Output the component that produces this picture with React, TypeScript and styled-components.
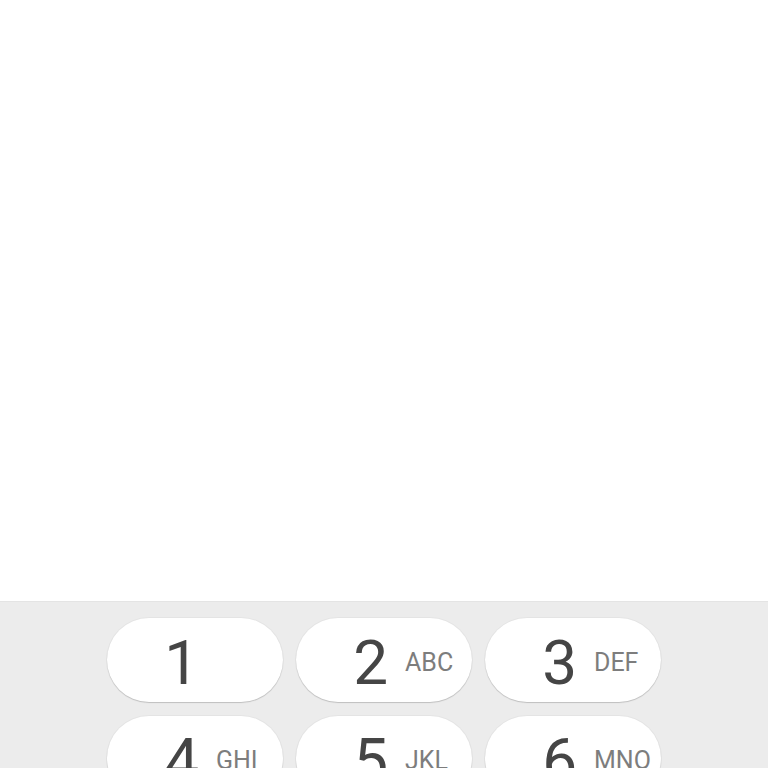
import React from "react";
import styled, { createGlobalStyle } from "styled-components";

const keys = [
  { digit: "1", letters: "" },
  { digit: "2", letters: "ABC" },
  { digit: "3", letters: "DEF" },
  { digit: "4", letters: "GHI" },
  { digit: "5", letters: "JKL" },
  { digit: "6", letters: "MNO" },
  { digit: "7", letters: "PQRS" },
  { digit: "8", letters: "TUV" },
  { digit: "9", letters: "WXYZ" },
];

export default function App() {
  return (
    <Screen>
      <GlobalStyle />
      <Display />
      <Keypad>
        <KeyGrid>
          {keys.map((k) => (
            <Key key={k.digit}>
              <Digit>{k.digit}</Digit>
              <Letters>{k.letters}</Letters>
            </Key>
          ))}
        </KeyGrid>
      </Keypad>
    </Screen>
  );
}

const GlobalStyle = createGlobalStyle`
  html, body {
    margin: 0;
    padding: 0;
    background: #ffffff;
    overflow: hidden;
  }
`;

const Screen = styled.div`
  display: flex;
  flex-direction: column;
  height: 768px;
  overflow: hidden;
  font-family: Roboto, "Noto Sans", sans-serif;
`;

const Display = styled.div`
  flex: 0 0 601px;
  background: #ffffff;
`;

const Keypad = styled.div`
  flex: 1;
  background: #ececec;
  border-top: 1px solid #e4e4e4;
  padding-top: 16px;
  display: flex;
  justify-content: center;
`;

const KeyGrid = styled.div`
  display: grid;
  grid-template-columns: repeat(3, 176px);
  grid-auto-rows: 84px;
  column-gap: 13px;
  row-gap: 14px;
`;

const Key = styled.div`
  display: grid;
  grid-template-columns: 88px 1fr;
  column-gap: 21px;
  align-items: center;
  background: #ffffff;
  border-radius: 42px;
  box-shadow: 0 1px 1px rgba(0, 0, 0, 0.16), 0 0 0 1px rgba(0, 0, 0, 0.03);
`;

const Digit = styled.span`
  justify-self: end;
  font-size: 62px;
  line-height: 1;
  color: #454545;
  margin-right: -4px;
  margin-top: 5px;
`;

const Letters = styled.span`
  justify-self: start;
  font-size: 25px;
  line-height: 1;
  color: #7d7d7d;
  margin-top: 4px;
`;
